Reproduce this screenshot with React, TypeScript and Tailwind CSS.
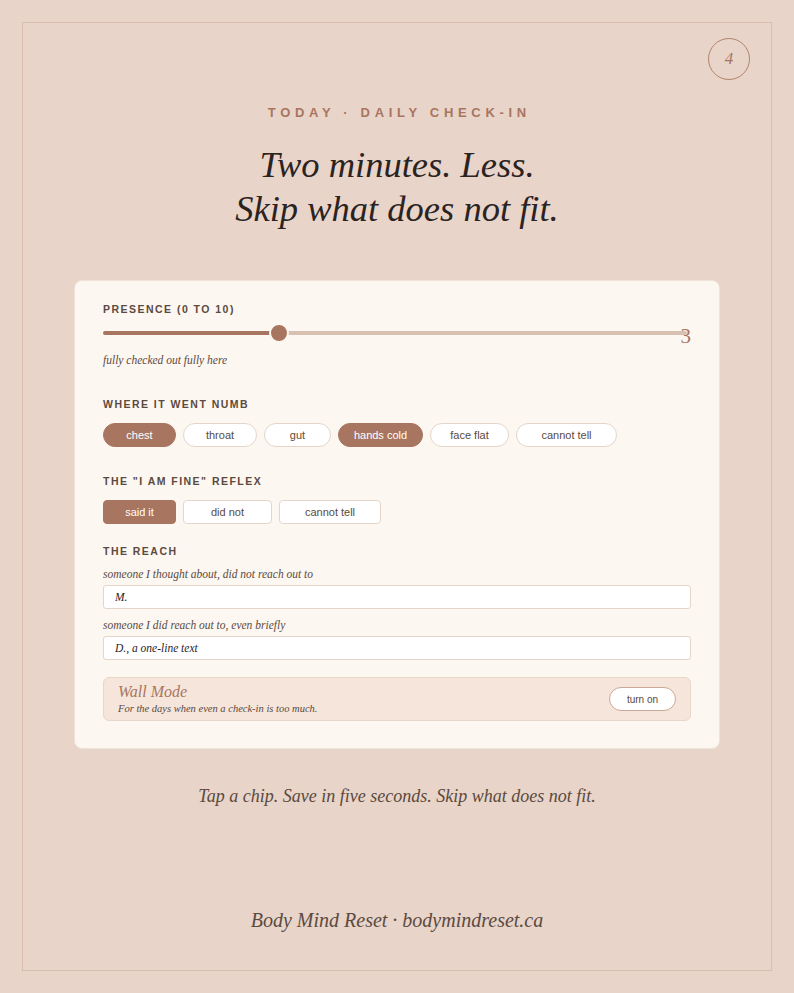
const serif = "font-['Liberation_Serif',serif]";
const sans = "font-['Liberation_Sans',Arial,sans-serif]";

function Label({ children, className = '' }: { children: React.ReactNode; className?: string }) {
  return (
    <div className={`${sans} text-[10.5px] leading-[14px] font-bold tracking-[0.14em] text-[#5b4a40] ${className}`}>
      {children}
    </div>
  );
}

function Chip({ label, on, width, pill = true }: { label: string; on?: boolean; width: string; pill?: boolean }) {
  return (
    <div
      className={`${sans} ${width} h-[24px] flex items-center justify-center text-[11px] ${pill ? 'rounded-full' : 'rounded-[4px]'} ${
        on ? 'bg-[#a87560] text-white border border-[#a87560]' : 'bg-white text-[#5b4a40] border border-[#e4d5ca]'
      }`}
    >
      {label}
    </div>
  );
}

export default function App() {
  return (
    <div className="w-[794px] h-[993px] bg-[#e8d4c9] p-[22px]">
      <div className="relative h-full border border-[#d9bdae] flex flex-col items-center">
        <div className="absolute right-[21px] top-[15px] w-[42px] h-[42px] rounded-full border border-[#b4846d] flex items-center justify-center">
          <span className={`${serif} italic text-[17px] text-[#a87560]`}>4</span>
        </div>

        <div className={`${sans} mt-[82px] text-[13px] leading-[16px] font-bold tracking-[0.36em] text-[#a87560] pl-[0.36em]`}>
          TODAY · DAILY CHECK-IN
        </div>

        <h1 className={`${serif} italic mt-[22px] text-[36.5px] leading-[44px] text-[#2b231f] text-center`}>
          Two minutes. Less.
          <br />
          Skip what does not fit.
        </h1>

        <div className="mt-[49px] w-[646px] bg-[#fdf7f2] rounded-[8px] border border-[#efe2d8] px-[28px] pt-[21px] pb-[27px]">
          <Label>PRESENCE (0 TO 10)</Label>
          <div className="mt-[7px] h-[20px] flex items-center">
            <div className="flex-1 relative h-[20px] flex items-center">
              <div className="h-[4px] w-[30%] bg-[#a87560] rounded-l-full" />
              <div className="h-[4px] flex-1 bg-[#d8c1b3] rounded-r-full" />
              <div className="absolute left-[30%] -translate-x-[9px] top-0 w-[20px] h-[20px] rounded-full bg-[#a87560] border-2 border-[#fdf7f2]" />
            </div>
            <span className={`${serif} text-[21px] leading-[20px] text-[#a87560] -ml-[6px] mt-[5px]`}>3</span>
          </div>
          <div className={`${serif} italic mt-[10px] text-[11.5px] leading-[14px] text-[#5b4a40]`}>
            fully checked out fully here
          </div>

          <Label className="mt-[30px]">WHERE IT WENT NUMB</Label>
          <div className="mt-[12px] flex gap-[7px]">
            <Chip label="chest" on width="w-[73px]" />
            <Chip label="throat" width="w-[74px]" />
            <Chip label="gut" width="w-[67px]" />
            <Chip label="hands cold" on width="w-[85px]" />
            <Chip label="face flat" width="w-[79px]" />
            <Chip label="cannot tell" width="w-[101px]" />
          </div>

          <Label className="mt-[27px]">THE "I AM FINE" REFLEX</Label>
          <div className="mt-[12px] flex gap-[7px]">
            <Chip label="said it" on pill={false} width="w-[73px]" />
            <Chip label="did not" pill={false} width="w-[89px]" />
            <Chip label="cannot tell" pill={false} width="w-[102px]" />
          </div>

          <Label className="mt-[20px]">THE REACH</Label>
          <div className={`${serif} italic mt-[9px] text-[11.5px] leading-[14px] text-[#5b4a40]`}>
            someone I thought about, did not reach out to
          </div>
          <input
            readOnly
            value="M."
            className={`${serif} italic mt-[4px] w-full h-[24px] bg-white border border-[#e4d5ca] rounded-[3px] px-[11px] text-[11.5px] text-[#2b231f] outline-none`}
          />
          <div className={`${serif} italic mt-[9px] text-[11.5px] leading-[14px] text-[#5b4a40]`}>
            someone I did reach out to, even briefly
          </div>
          <input
            readOnly
            value="D., a one-line text"
            className={`${serif} italic mt-[4px] w-full h-[24px] bg-white border border-[#e4d5ca] rounded-[3px] px-[11px] text-[11.5px] text-[#2b231f] outline-none`}
          />

          <div className="mt-[17px] h-[44px] bg-[#f5e5da] border border-[#ead6c9] rounded-[6px] pl-[14px] pr-[14px] flex items-center justify-between">
            <div>
              <div className={`${serif} italic text-[16px] leading-[18px] text-[#a87560]`}>Wall Mode</div>
              <div className={`${serif} italic text-[10.5px] leading-[13px] text-[#5b4a40] mt-[1px]`}>
                For the days when even a check-in is too much.
              </div>
            </div>
            <div className={`${sans} w-[67px] h-[24px] rounded-full bg-white border border-[#c9a898] flex items-center justify-center text-[10px] text-[#5b4a40]`}>
              turn on
            </div>
          </div>
        </div>

        <div className={`${serif} italic mt-[36px] text-[18px] leading-[22px] text-[#5b4a40]`}>
          Tap a chip. Save in five seconds. Skip what does not fit.
        </div>

        <div className={`${serif} italic mt-[101px] text-[20px] leading-[24px] text-[#5b4a40]`}>
          Body Mind Reset · bodymindreset.ca
        </div>
      </div>
    </div>
  );
}
